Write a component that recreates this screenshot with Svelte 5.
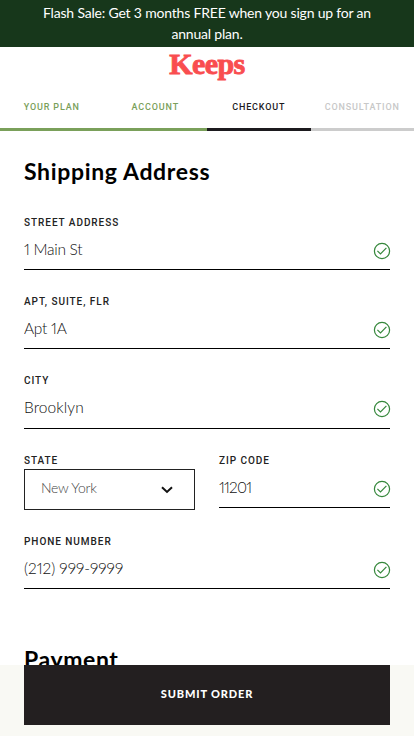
<script>
	// Checkout steps, in order
	const steps = [
		{ label: 'Your Plan', status: 'done' },
		{ label: 'Account', status: 'done' },
		{ label: 'Checkout', status: 'current' },
		{ label: 'Consultation', status: 'upcoming' }
	];

	const states = ['New York', 'New Jersey', 'Connecticut'];

	let street = $state('1 Main St');
	let apartment = $state('Apt 1A');
	let city = $state('Brooklyn');
	let region = $state('New York');
	let zip = $state('11201');
	let phone = $state('(212) 999-9999');
</script>

{#snippet check()}
	<svg class="check" viewBox="0 0 18 18" aria-hidden="true">
		<circle cx="9" cy="9" r="7.6" />
		<path d="M4.4 8.9l3.1 3 5.9-6" />
	</svg>
{/snippet}

<div class="page">
	<div class="banner">Flash Sale: Get 3 months FREE when you sign up for an<br />annual plan.</div>

	<header>
		<div class="logo">Keeps</div>
		<nav>
			{#each steps as step}
				<div class="step {step.status}"><span>{step.label}</span></div>
			{/each}
		</nav>
	</header>

	<main>
		<h2 class="shipping">Shipping Address</h2>

		<div class="field">
			<label for="street">Street Address</label>
			<div class="control">
				<input id="street" class="street" bind:value={street} />
				{@render check()}
			</div>
		</div>

		<div class="field">
			<label for="apartment">Apt, Suite, Flr</label>
			<div class="control">
				<input id="apartment" class="apartment" bind:value={apartment} />
				{@render check()}
			</div>
		</div>

		<div class="field city-field">
			<label for="city">City</label>
			<div class="control">
				<input id="city" class="city" bind:value={city} />
				{@render check()}
			</div>
		</div>

		<div class="row">
			<div class="field">
				<label class="state-label" for="state">State</label>
				<div class="select">
					<select id="state" bind:value={region}>
						{#each states as name}
							<option value={name}>{name}</option>
						{/each}
					</select>
					<svg class="chevron" viewBox="0 0 12 8" aria-hidden="true">
						<path d="M1 1.3l5 4.7 5-4.7" />
					</svg>
				</div>
			</div>
			<div class="field">
				<label for="zip">Zip Code</label>
				<div class="control">
					<input id="zip" class="zip" bind:value={zip} />
					{@render check()}
				</div>
			</div>
		</div>

		<div class="field">
			<label for="phone">Phone Number</label>
			<div class="control">
				<input id="phone" bind:value={phone} />
				{@render check()}
			</div>
		</div>

		<h2 class="payment">Payment</h2>
	</main>

	<!-- Stays at the bottom of the screen, over the form -->
	<footer>
		<button type="button">Submit Order</button>
	</footer>
</div>

<style>
	:global(body) {
		margin: 0;
		background: #fff;
	}

	.page {
		box-sizing: border-box;
		height: 736px;
		overflow: hidden;
		color: #000;
		font-family: Lato, 'Open Sans', sans-serif;
	}

	.banner {
		box-sizing: border-box;
		height: 47px;
		padding-top: 2px;
		background: #17371b;
		color: #fff;
		font-size: 14px;
		line-height: 21px;
		letter-spacing: -0.19px;
		text-align: center;
		white-space: nowrap;
	}

	.logo {
		height: 39px;
		color: #f94d4f;
		font-family: 'Liberation Serif', serif;
		font-size: 30px;
		font-weight: bold;
		line-height: 34px;
		letter-spacing: -0.6px;
		text-align: center;
		-webkit-text-stroke: 0.9px #f94d4f;
	}

	nav {
		display: flex;
	}

	.step {
		box-sizing: border-box;
		flex: 1 1 0;
		height: 45px;
		padding-top: 13px;
		border-bottom: 3px solid #7aa05a;
		color: #7aa05a;
		font-family: Roboto, sans-serif;
		font-size: 9px;
		font-weight: 500;
		line-height: 16px;
		letter-spacing: 0.85px;
		text-align: center;
		text-transform: uppercase;
	}

	.step.current {
		border-color: #1c1a1e;
		color: #1c1a1e;
	}

	.step.upcoming {
		border-color: #ccc;
		color: #c8c8c8;
	}

	main {
		padding: 0 24px;
	}

	h2 {
		margin: 0;
		font-size: 23px;
		font-weight: bold;
		line-height: 30px;
	}

	.shipping {
		padding: 25px 0 28px;
		letter-spacing: 0.65px;
	}

	.field {
		height: 79px;
	}

	.city-field {
		height: 80px;
	}

	.city-field .control {
		height: 41px;
		padding-bottom: 1px;
	}

	label {
		display: block;
		padding-top: 2px;
		color: #222;
		font-family: Roboto, sans-serif;
		font-size: 10px;
		font-weight: 500;
		line-height: 14px;
		letter-spacing: 0.95px;
		text-transform: uppercase;
	}

	.control {
		display: flex;
		align-items: center;
		box-sizing: border-box;
		height: 40px;
		border-bottom: 1px solid #000;
	}

	input {
		flex: 1;
		min-width: 0;
		height: 36px;
		padding: 0 0 2px;
		box-sizing: border-box;
		border: 0;
		outline: 0;
		background: none;
		color: #111;
		font: 300 15.5px/20px Lato, sans-serif;
		font-variant-numeric: proportional-nums;
	}

	.street {
		letter-spacing: -0.28px;
	}

	.apartment {
		letter-spacing: -0.25px;
	}

	.city {
		letter-spacing: 0.1px;
	}

	.zip {
		letter-spacing: -0.8px;
	}

	.check {
		width: 18px;
		height: 18px;
		margin-top: 3px;
		margin-right: -1px;
		fill: none;
		stroke: #35873b;
		stroke-width: 1.2;
	}

	.row {
		display: flex;
		gap: 24px;
		height: 81px;
	}

	.row .field {
		flex: 1 1 0;
		min-width: 0;
	}

	.state-label {
		padding-bottom: 1px;
	}

	.select {
		display: flex;
		align-items: center;
		box-sizing: border-box;
		height: 41px;
		padding: 0 21px 0 16px;
		border: 1px solid #222;
	}

	select {
		flex: 1;
		min-width: 0;
		padding: 0 0 3px;
		border: 0;
		appearance: none;
		background: none;
		color: #444;
		font: 300 14px/20px Lato, sans-serif;
		letter-spacing: -0.25px;
	}

	.chevron {
		width: 12px;
		height: 8px;
		fill: none;
		stroke: #111;
		stroke-width: 2;
	}

	.payment {
		padding-top: 32px;
		letter-spacing: 0.6px;
	}

	footer {
		position: fixed;
		right: 0;
		bottom: 0;
		left: 0;
		height: 71px;
		padding: 0 24px;
		background: #f9f9f4;
	}

	button {
		width: 100%;
		height: 60px;
		padding: 0 0 2px;
		border: 0;
		background: #231f20;
		color: #fff;
		font: 900 11px/20px Lato, sans-serif;
		letter-spacing: 0.85px;
		text-transform: uppercase;
	}
</style>
